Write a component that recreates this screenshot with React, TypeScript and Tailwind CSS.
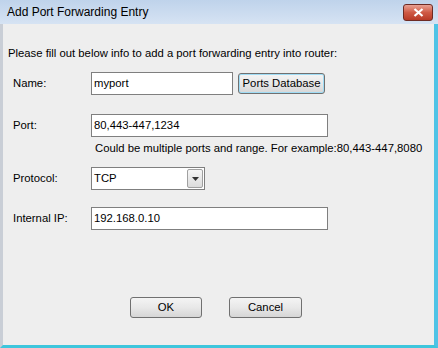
import React from 'react';

const FONT = { fontFamily: '"Liberation Sans", Arial, sans-serif' };

const TextBox: React.FC<{ value: string; className: string }> = ({ value, className }) => (
  <div className={`h-[23px] border border-[#7f7f7f] bg-white flex items-center pl-[2px] text-black ${className}`}>
    {value}
  </div>
);

const Btn: React.FC<{ label: string; className: string }> = ({ label, className }) => (
  <button
    type="button"
    className={`rounded-[3px] border border-[#707070] bg-gradient-to-b from-[#f4f4f4] via-[#e8e8e8] to-[#d6d6d6] text-[11.3px] text-black flex items-center justify-center ${className}`}
  >
    {label}
  </button>
);

const App: React.FC = () => {
  return (
    <div className="w-[438px] h-[348px] flex flex-col bg-[#eeeeee] overflow-hidden" style={FONT}>
      {/* title bar */}
      <div className="h-[24px] flex items-center justify-between pl-[7px] pr-[5px] bg-gradient-to-b from-[#bfd3eb] to-[#d6e3f3]">
        <span className="text-[12px] text-black">Add Port Forwarding Entry</span>
        <div className="w-[30px] h-[17px] rounded-[3px] border border-[#6d2b24] bg-gradient-to-b from-[#e8a093] via-[#cf5a45] to-[#b83a26] flex items-center justify-center">
          <svg width="11" height="9" viewBox="0 0 11 9">
            <path d="M1.5 1 L9.5 8 M9.5 1 L1.5 8" stroke="white" strokeWidth="2.2" />
          </svg>
        </div>
      </div>

      {/* body */}
      <div className="flex-1 flex border-l-[3px] border-l-[#c9ced6] border-r-[4px] border-r-[#4fc3e6] border-b-[3px] border-b-[#3ec6dc]">
        <div className="flex-1 flex flex-col pl-[5px] pt-[22px] text-[11.3px] text-black">
          <p className="h-[15px] leading-[15px] whitespace-nowrap">Please fill out below info to add a port forwarding entry into router:</p>

          <div className="flex items-center mt-[11px]">
            <span className="w-[83px] pl-[5px]">Name:</span>
            <TextBox value="myport" className="w-[142px]" />
            <Btn label="Ports Database" className="ml-[5px] w-[87px] h-[21px] border-[#3c7fb1] shadow-[inset_0_0_0_1px_#9fdcf5]" />
          </div>

          <div className="flex items-center mt-[19px]">
            <span className="w-[83px] pl-[5px]">Port:</span>
            <TextBox value="80,443-447,1234" className="w-[237px]" />
          </div>
          <p className="ml-[87px] mt-[4px] h-[15px] leading-[15px] whitespace-nowrap">Could be multiple ports and range. For example:80,443-447,8080</p>

          <div className="flex items-center mt-[11px]">
            <span className="w-[83px] pl-[5px]">Protocol:</span>
            <div className="w-[114px] h-[23px] border border-[#7f7f7f] bg-white flex items-center">
              <span className="flex-1 pl-[2px]">TCP</span>
              <div className="w-[16px] h-[19px] mr-[1px] rounded-[2px] border border-[#a0a0a0] bg-gradient-to-b from-[#f6f6f6] to-[#dcdcdc] flex items-center justify-center">
                <svg width="7" height="4" viewBox="0 0 7 4">
                  <path d="M0 0 H7 L3.5 4 Z" fill="#333" />
                </svg>
              </div>
            </div>
          </div>

          <div className="flex items-center mt-[17px]">
            <span className="w-[83px] pl-[5px]">Internal IP:</span>
            <TextBox value="192.168.0.10" className="w-[237px]" />
          </div>

          <div className="flex mt-[67px] pl-[122px] gap-[27px]">
            <Btn label="OK" className="w-[72px] h-[21px]" />
            <Btn label="Cancel" className="w-[73px] h-[21px]" />
          </div>
        </div>
      </div>
    </div>
  );
};

export default App;
